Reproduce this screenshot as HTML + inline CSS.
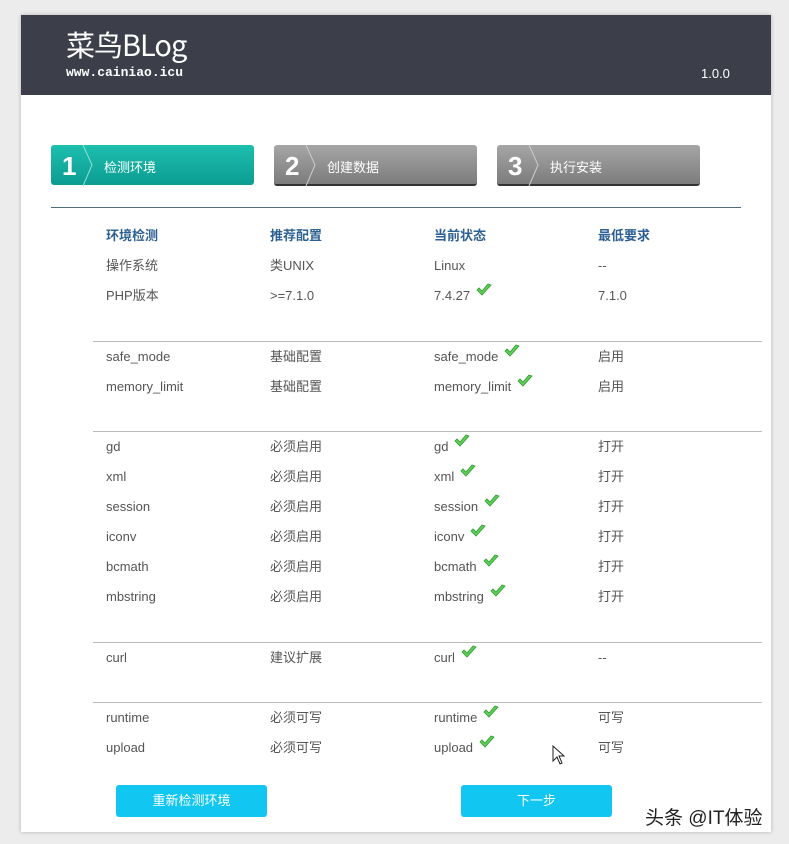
<!DOCTYPE html>
<html><head><meta charset="utf-8"><style>
*{margin:0;padding:0;box-sizing:border-box}
body{width:789px;height:844px;background:#ececec;font-family:"Liberation Sans","Noto Sans CJK SC",sans-serif;position:relative;overflow:hidden}
.wrap{position:absolute;left:21px;top:15px;width:750px;height:817px;background:#fff;box-shadow:0 0 4px rgba(0,0,0,.25)}
.hd{position:absolute;left:21px;top:15px;width:750px;height:80px;background:#3c3f4a;color:#fff}
.t{position:absolute;left:45px;top:8px;font-size:29px;font-family:"Noto Sans CJK SC","Liberation Sans",sans-serif;letter-spacing:-1px}
.u{position:absolute;left:45px;top:50px;font-size:13px;font-family:"Liberation Mono",monospace;font-weight:bold}
.v{position:absolute;left:680px;top:51px;font-size:13px}
.st{position:absolute;top:145px;width:203px;height:41px;border-radius:3px;color:#fff}
.st.a{background:linear-gradient(#1dbfae,#0c9c92);height:40px}
.st.g{background:linear-gradient(#a6a6a6,#7c7c7c);border-bottom:2px solid #333}
.st b{position:absolute;left:11px;top:6px;font-size:26px;font-family:"Liberation Sans",sans-serif}
.st svg{position:absolute;left:30px;top:0}
.st span{position:absolute;left:53px;top:12px;font-size:13px}
.ln{position:absolute;left:51px;top:207px;width:690px;height:1px;background:#4e6e7a}
.c{position:absolute;font-size:13px;line-height:16px;height:16px;color:#555;font-family:"Liberation Sans","Noto Sans CJK SC",sans-serif;white-space:nowrap}
.c span{display:inline-block;vertical-align:top;line-height:16px}
.h{color:#2e6193;font-weight:bold}
.sp{position:absolute;left:93px;width:669px;height:1px;background:#bbb}
.ck{display:inline-block;vertical-align:top;margin-left:6px;margin-top:-5px}
.btn{position:absolute;top:785px;width:151px;height:32px;background:#12c6f2;border-radius:3px;color:#fff;font-size:13px;text-align:center;line-height:32px}
.wm{position:absolute;left:645px;top:803px;font-size:19px;color:#222}
</style></head><body>
<div class="wrap"></div>
<div class="hd"><div class="t">菜鸟BLog</div><div class="u">www.cainiao.icu</div><div class="v">1.0.0</div></div>
<div class="st a" style="left:51px"><b>1</b><svg width="14" height="41"><path d="M2 0 L11 20 L2 41" stroke="#8fe0d6" fill="none"/></svg><span>检测环境</span></div>
<div class="st g" style="left:274px"><b>2</b><svg width="14" height="41"><path d="M2 0 L11 20 L2 41" stroke="#ccc" fill="none"/></svg><span>创建数据</span></div>
<div class="st g" style="left:497px"><b>3</b><svg width="14" height="41"><path d="M2 0 L11 20 L2 41" stroke="#ccc" fill="none"/></svg><span>执行安装</span></div>
<div class="ln"></div>
<div class="sp" style="top:341px"></div><div class="sp" style="top:431px"></div><div class="sp" style="top:642px"></div><div class="sp" style="top:702px"></div>
<div id="rows"></div>
<div class="btn" style="left:116px">重新检测环境</div>
<div class="btn" style="left:461px">下一步</div>
<svg style="position:absolute;left:552px;top:745px" width="14" height="22"><path d="M1 1 L1 16 L5 12 L8 19 L10 18 L7 11 L12 11 Z" fill="#fff" stroke="#222"/></svg>
<div class="wm">头条 @IT体验</div>
<script>
var ck='<svg class="ck" width="16" height="14"><path d="M1 7 L6 12 L15 2 L12 1 L6 8 L3 5 Z" fill="#5fcf5a" stroke="#2e9a2e" stroke-width="0.8"/></svg>';
var R=[[228,'环境检测','推荐配置','当前状态','最低要求',0,1],
[258,'操作系统','类UNIX','Linux','--',0],
[288,'PHP版本','>=7.1.0','7.4.27','7.1.0',1],
[349,'safe_mode','基础配置','safe_mode','启用',1],
[379,'memory_limit','基础配置','memory_limit','启用',1],
[439,'gd','必须启用','gd','打开',1],
[469,'xml','必须启用','xml','打开',1],
[499,'session','必须启用','session','打开',1],
[529,'iconv','必须启用','iconv','打开',1],
[559,'bcmath','必须启用','bcmath','打开',1],
[589,'mbstring','必须启用','mbstring','打开',1],
[650,'curl','建议扩展','curl','--',1],
[710,'runtime','必须可写','runtime','可写',1],
[740,'upload','必须可写','upload','可写',1]];
var X=[106,270,434,598],h='';
R.forEach(function(r){for(var i=0;i<4;i++){h+='<div class="c'+(r[6]?' h':'')+'" style="left:'+X[i]+'px;top:'+r[0]+'px"><span>'+r[i+1]+'</span>'+(i==2&&r[5]?ck:'')+'</div>';}});
document.getElementById('rows').innerHTML=h;
</script>
</body></html>
